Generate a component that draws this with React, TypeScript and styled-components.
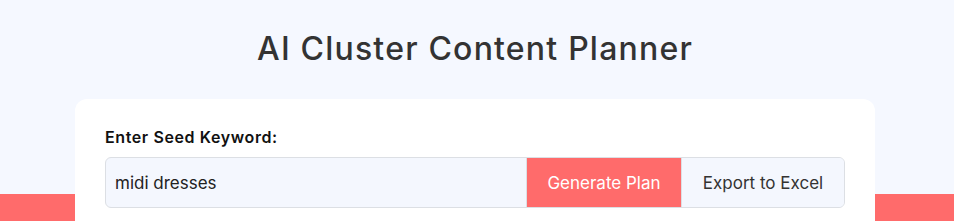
import React, { useState } from 'react'
import styled, { createGlobalStyle } from 'styled-components'

const GlobalStyle = createGlobalStyle`
  html, body {
    margin: 0;
    padding: 0;
  }
  body {
    font-family: Inter, "Noto Sans", sans-serif;
    color: #333;
    background: linear-gradient(#f5f8ff 0, #f5f8ff 194px, #ff6b6b 194px);
    min-height: 100vh;
  }
`

const Page = styled.div`
  padding: 31px 4px 0 0;
`

const Title = styled.h1`
  margin: 0;
  text-align: center;
  font-size: 32px;
  line-height: 36px;
  font-weight: 500;
  color: #333;
  letter-spacing: 1.2px;
`

const Card = styled.section`
  width: 800px;
  box-sizing: border-box;
  margin: 32px auto 0;
  padding: 28px 30px 30px;
  background: #fff;
  border-radius: 12px;
`

const Label = styled.label`
  display: block;
  font-size: 16px;
  line-height: 21px;
  font-weight: 600;
  color: #111;
  letter-spacing: 0.6px;
  margin-bottom: 9px;
`

const Row = styled.div`
  display: flex;
  height: 51px;
  box-sizing: border-box;
  border: 1px solid #dcdfe4;
  border-radius: 6px;
  overflow: hidden;
  background: #f4f7fe;
`

const Input = styled.input`
  flex: 1;
  min-width: 0;
  border: none;
  outline: none;
  background: transparent;
  padding: 0 10px 0 9px;
  font-family: inherit;
  font-size: 17px;
  color: #222;
`

const Button = styled.button<{ $primary?: boolean }>`
  border: none;
  border-left: 1px solid #dcdfe4;
  padding: 0 20px;
  font-family: inherit;
  font-size: 17px;
  cursor: pointer;
  background: ${p => (p.$primary ? '#ff6b6b' : '#f4f7fe')};
  color: ${p => (p.$primary ? '#fff' : '#333')};
  width: ${p => (p.$primary ? '155px' : '163px')};
`

export default function App() {
  const [keyword, setKeyword] = useState('midi dresses')
  return (
    <>
      <GlobalStyle />
      <Page>
        <Title>AI Cluster Content Planner</Title>
        <Card>
          <Label htmlFor="seed">Enter Seed Keyword:</Label>
          <Row>
            <Input id="seed" value={keyword} onChange={e => setKeyword(e.target.value)} />
            <Button $primary>Generate Plan</Button>
            <Button>Export to Excel</Button>
          </Row>
        </Card>
      </Page>
    </>
  )
}
